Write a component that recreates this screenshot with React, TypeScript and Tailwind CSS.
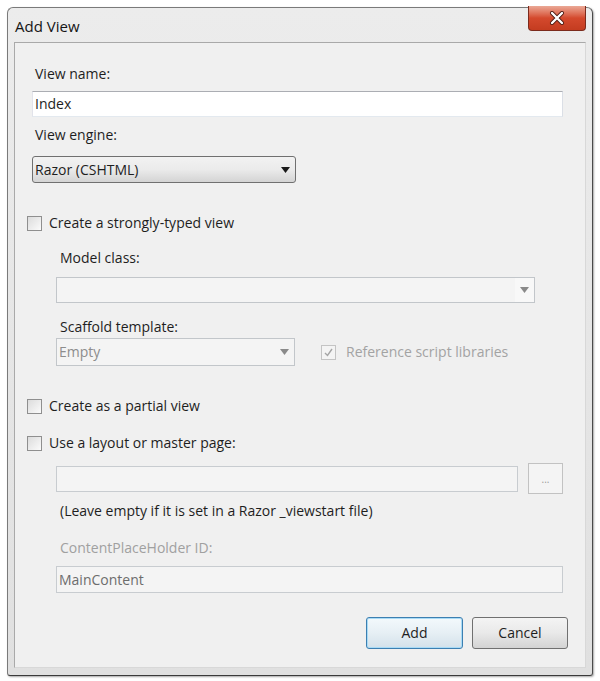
import React from "react";

const font = { fontFamily: '"Open Sans", "Noto Sans", "Liberation Sans", sans-serif' };

function Arrow({ disabled = false }: { disabled?: boolean }) {
  return (
    <svg width="9" height="6" viewBox="0 0 9 6" className="shrink-0">
      <path d="M0 0 H9 L4.5 6 Z" fill={disabled ? "#8a8a8a" : "#1a1a1a"} />
    </svg>
  );
}

function Check({ checked = false, disabled = false }: { checked?: boolean; disabled?: boolean }) {
  return (
    <span
      className={
        "flex h-[15px] w-[15px] shrink-0 items-center justify-center border " +
        (disabled
          ? "border-[#c4c4c4] bg-[#f4f4f4]"
          : "border-[#8f8f8f] bg-gradient-to-br from-[#dcdcdc] to-[#fbfbfb]")
      }
    >
      {checked && (
        <svg width="11" height="11" viewBox="0 0 11 11">
          <path d="M2 6 L4.5 8.5 L9 2" fill="none" stroke="#a5a5a5" strokeWidth="1.4" />
        </svg>
      )}
    </span>
  );
}

export default function App() {
  return (
    <div className="min-h-[681px] w-[600px] bg-white pl-[7px] pt-[7px]" style={font}>
      {/* window frame */}
      <div className="h-[669px] w-[586px] rounded-t-[6px] rounded-b-[3px] border border-[#7a7a7a] border-b-[#3a3a3a] border-r-[#4a4a4a] bg-gradient-to-b from-[#ececec] via-[#e6e6e6] to-[#e0e0e0] px-[6px] pb-[7px] shadow-[1px_1px_2px_rgba(0,0,0,0.35)]">
        {/* title bar */}
        <div className="flex h-[34px] items-start justify-between">
          <span className="mt-[9px] pl-[1px] text-[15px] leading-[19px] text-[#151515]">Add View</span>
          <div className="-mt-[2px] flex h-[25px] w-[58px] items-center justify-center rounded-b-[4px] border border-t-0 border-[#7b2a1c] bg-gradient-to-b from-[#eaa896] via-[#d4492d] to-[#c43c20]">
            <svg width="16" height="14" viewBox="0 0 16 14">
              <path d="M3 2 L13 12 M13 2 L3 12" stroke="#4b1a12" strokeWidth="4" strokeLinecap="round" />
              <path d="M3 2 L13 12 M13 2 L3 12" stroke="#ffffff" strokeWidth="2.4" strokeLinecap="round" />
            </svg>
          </div>
        </div>

        {/* client area */}
        <div className="flex h-[626px] flex-col border border-[#a9a9a9] border-b-[#d8d8d8] border-r-[#d8d8d8] bg-[#f0f0f0] pl-[17px] pr-[22px] text-[14px] leading-[20px] text-[#1e1e1e]">
          <div className="mt-[21px] pl-[3px]">View name:</div>
          <div className="mt-[7px] flex h-[26px] items-center border border-[#abadb3] border-l-[#e2e3ea] border-r-[#dbdfe6] border-b-[#e3e9ef] bg-white pl-[2px]">
            Index
          </div>

          <div className="mt-[8px] pl-[3px]">View engine:</div>
          <div className="mt-[11px] flex h-[27px] w-[264px] items-center justify-between rounded-[3px] border border-[#707070] bg-gradient-to-b from-[#f2f2f2] via-[#ebebeb] to-[#d4d4d4] pl-[2px] pr-[5px]">
            <span>Razor (CSHTML)</span>
            <Arrow />
          </div>

          <div className="-ml-[5px] mt-[30px] flex items-center gap-[7px]">
            <Check />
            <span>Create a strongly-typed view</span>
          </div>

          <div className="ml-[24px] flex flex-col">
            <div className="mt-[15px] pl-[4px]">Model class:</div>
            <div className="mt-[9px] flex h-[26px] w-[479px] items-center justify-end border border-[#c2c6ca] bg-[#f4f4f4]">
              <div className="flex h-full w-[19px] items-center justify-center bg-[#f8f8f8]">
                <Arrow disabled />
              </div>
            </div>

            <div className="mt-[14px] pl-[4px]">Scaffold template:</div>
            <div className="mt-[1px] flex items-center">
              <div className="flex h-[28px] w-[239px] items-center justify-between border border-[#c2c6ca] bg-[#f4f4f4] pl-[2px] pr-[5px] text-[#8d8d8d]">
                <span>Empty</span>
                <Arrow disabled />
              </div>
              <div className="ml-[26px] flex items-center gap-[10px] text-[#a3a3a3]">
                <Check checked disabled />
                <span>Reference script libraries</span>
              </div>
            </div>
          </div>

          <div className="-ml-[5px] mt-[30px] flex items-center gap-[7px]">
            <Check />
            <span>Create as a partial view</span>
          </div>

          <div className="-ml-[5px] mt-[17px] flex items-center gap-[7px]">
            <Check />
            <span>Use a layout or master page:</span>
          </div>

          <div className="ml-[24px] flex flex-col">
            <div className="mt-[10px] flex items-center gap-[10px]">
              <div className="h-[26px] w-[462px] border border-[#c8ccd0] bg-[#f4f4f4]" />
              <div className="flex h-[31px] w-[35px] items-center justify-center border border-[#c2c2c2] bg-[#f4f4f4] text-[10px] leading-none text-[#9a9a9a]">
                ...
              </div>
            </div>
            <div className="mt-[7px] pl-[4px]">(Leave empty if it is set in a Razor _viewstart file)</div>
            <div className="mt-[17px] pl-[4px] text-[#a0a0a0]">ContentPlaceHolder ID:</div>
            <div className="mt-[8px] flex h-[27px] w-[507px] items-center border border-[#c8ccd0] bg-[#f4f4f4] pl-[2px] text-[#6d6d6d]">
              MainContent
            </div>
          </div>

          <div className="-mr-[5px] mt-[24px] flex justify-end gap-[9px]">
            <button className="h-[32px] w-[97px] rounded-[3px] border border-[#3c7fb1] bg-gradient-to-b from-[#f3f9fc] via-[#e6eff4] to-[#d3e1ea] text-[14px] text-[#1e1e1e] shadow-[inset_0_0_0_1px_#a9dbf6]">
              Add
            </button>
            <button className="h-[32px] w-[96px] rounded-[3px] border border-[#707070] bg-gradient-to-b from-[#f4f4f4] via-[#e9e9e9] to-[#d3d3d3] text-[14px] text-[#1e1e1e]">
              Cancel
            </button>
          </div>
        </div>
      </div>
    </div>
  );
}
